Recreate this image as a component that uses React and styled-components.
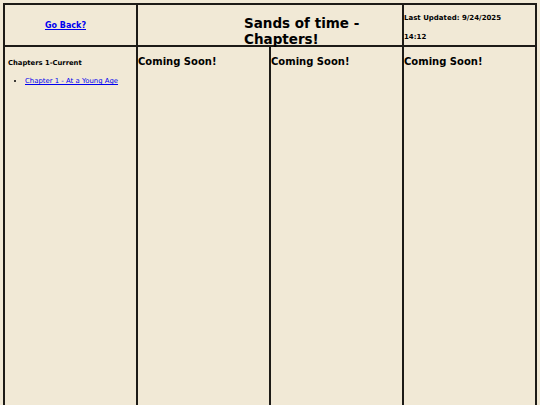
import { createGlobalStyle, styled } from "styled-components";

const GlobalStyle = createGlobalStyle`
    html, body {
        margin: 0;
        padding: 0;
        background: #f1e9d6;
        font-family: "DejaVu Sans", Verdana, sans-serif;
        color: #000;
        overflow: hidden;
    }
`

// 4 columns, header row + body row, dark lines between cells
export default function App() {
    return (
        <>
            <GlobalStyle />
            <SPage>
                <SHeadCell>
                    <SBackLink href="#">Go Back?</SBackLink>
                </SHeadCell>
                <STitleCell>
                    <STitle>Sands of time -<br />Chapters!</STitle>
                </STitleCell>
                <SUpdatedCell>
                    <div>Last Updated: 9/24/2025</div>
                    <div>14:12</div>
                </SUpdatedCell>

                <SColumn $pad="12px 3px">
                    <SListHead>Chapters 1-Current</SListHead>
                    <SUl>
                        <li><SChapterLink href="#">Chapter 1 - At a Young Age</SChapterLink></li>
                    </SUl>
                </SColumn>
                <SColumn>
                    <SSoon>Coming Soon!</SSoon>
                </SColumn>
                <SColumn>
                    <SSoon>Coming Soon!</SSoon>
                </SColumn>
                <SColumn>
                    <SSoon>Coming Soon!</SSoon>
                </SColumn>
            </SPage>
        </>
    );
}

const SPage = styled.div`
    margin: 3px 3px 0;
    padding: 2px 2px 0;
    background: #1d1b17;
    display: grid;
    grid-template-columns: repeat(4, 1fr);
    grid-template-rows: 40px 358px;
    gap: 2px;
`

const SHeadCell = styled.div`
    background: #f1e9d6;
    display: flex;
    align-items: center;
    justify-content: center;
    padding-right: 10px;
    padding-top: 1px;
`

const SBackLink = styled.a`
    color: #0000ee;
    font-size: 8px;
    font-weight: bold;
    text-decoration: underline;
`

const STitleCell = styled.div`
    grid-column: span 2;
    background: #f1e9d6;
    padding: 10px 0 0 106px;
`

const STitle = styled.h1`
    margin: 0;
    font-size: 13.5px;
    line-height: 16px;
    font-weight: bold;
`

const SUpdatedCell = styled.div`
    background: #f1e9d6;
    padding-top: 4px;
    font-size: 7px;
    font-weight: bold;
    line-height: 19px;
`

const SColumn = styled.div`
    background: #f1e9d6;
    padding: ${(p) => p.$pad || "9px 0"};
`

const SListHead = styled.div`
    font-size: 6.8px;
    font-weight: bold;
    line-height: 8px;
`

const SUl = styled.ul`
    margin: 10px 0 0;
    padding-left: 17px;
    font-size: 6.9px;
    line-height: 8px;
`

const SChapterLink = styled.a`
    color: #0000ee;
    text-decoration: underline;
`

const SSoon = styled.div`
    font-size: 10px;
    font-weight: bold;
    line-height: 12px;
`
